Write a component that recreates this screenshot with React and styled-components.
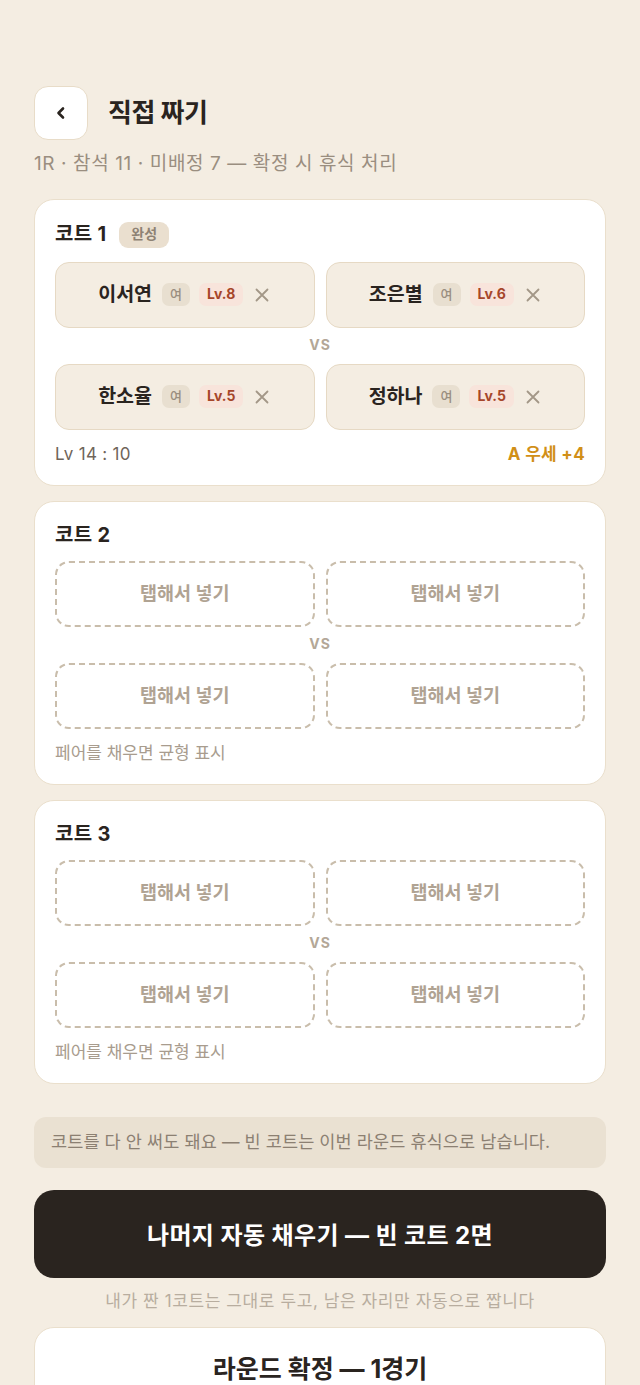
import React from "react";
import styled, { createGlobalStyle } from "styled-components";

const Global = createGlobalStyle`
  html, body { margin: 0; padding: 0; background: #F4EDE2; }
  body { font-family: Inter, "Noto Sans CJK KR", "Noto Sans", sans-serif; color: #2A241F; overflow: hidden; line-height: 1.45; }
  * { box-sizing: border-box; }
`;

const Page = styled.div`
  width: 640px;
  padding: 86px 34px 0;
  display: flex;
  flex-direction: column;
  & > * { flex-shrink: 0; }
`;

const Header = styled.div`
  display: flex;
  align-items: center;
  gap: 20px;
`;

const BackButton = styled.button`
  width: 54px;
  height: 54px;
  border-radius: 14px;
  background: #fff;
  border: 1.5px solid #E8DCC8;
  display: flex;
  align-items: center;
  justify-content: center;
  padding: 0;
  color: #2A241F;
`;

const Title = styled.h1`
  margin: 0;
  font-size: 26px;
  font-weight: 700;
  letter-spacing: -0.5px;
`;

const Sub = styled.div`
  margin-top: 10px;
  font-size: 19px;
  color: #9A8E80;
  letter-spacing: 0.6px;
`;

const Cards = styled.div`
  margin-top: 21px;
  display: flex;
  flex-direction: column;
  gap: 15px;
`;

const Card = styled.div`
  background: #fff;
  border: 1.5px solid #EADFCC;
  border-radius: 20px;
  padding: 21px 20px 19px;
`;

const CardHead = styled.div`
  display: flex;
  align-items: center;
  gap: 13px;
  height: ${p => (p.$short ? "25px" : "28px")};
`;

const CardTitle = styled.div`
  font-size: 20px;
  font-weight: 700;
  letter-spacing: 0.3px;
`;

const Badge = styled.span`
  background: #EADFCF;
  color: #8E8274;
  font-size: 14px;
  font-weight: 700;
  padding: 0 12px;
  height: 26px;
  border-radius: 9px;
  display: inline-flex;
  align-items: center;
`;

const Grid = styled.div`
  margin-top: 13px;
  display: grid;
  grid-template-columns: 1fr 1fr;
  column-gap: 11px;
`;

const Slot = styled.div`
  height: 66px;
  border-radius: 14px;
  display: flex;
  align-items: center;
  justify-content: center;
  gap: 9px;
  background: ${p => (p.$empty ? "#fff" : "#F4EDE2")};
  border: ${p => (p.$empty ? "2px dashed #C9BDAB" : "1.5px solid #E6D9C4")};
`;

const EmptyText = styled.span`
  font-size: 18.5px;
  font-weight: 700;
  color: #B0A393;
`;

const Name = styled.span`
  font-size: 19.5px;
  font-weight: 700;
  margin-right: 1px;
`;

const Tag = styled.span`
  height: 23px;
  padding: 0 8px;
  border-radius: 7px;
  font-size: ${p => (p.$lv ? "14px" : "13px")};
  font-weight: ${p => (p.$lv ? 700 : 500)};
  background: ${p => (p.$lv ? "#F8E4DB" : "#E8DFD0")};
  color: ${p => (p.$lv ? "#A6462A" : "#9A8E80")};
  display: inline-flex;
  align-items: center;
`;

const Close = styled.span`
  display: inline-flex;
  color: #A39787;
  margin-left: 1px;
`;

const Vs = styled.div`
  grid-column: 1 / span 2;
  height: 36px;
  display: flex;
  align-items: center;
  justify-content: center;
  font-size: 14px;
  font-weight: 700;
  color: #B3A797;
  letter-spacing: 1px;
`;

const Foot = styled.div`
  margin-top: 12px;
  height: 24px;
  display: flex;
  justify-content: space-between;
  align-items: center;
  font-size: 17px;
  line-height: 24px;
  letter-spacing: ${p => (p.$muted ? "0" : "0.3px")};
  color: ${p => (p.$muted ? "#A89C8E" : "#6F655A")};
`;

const Adv = styled.span`
  color: #D18F17;
  font-weight: 700;
  font-size: 17px;
  line-height: 24px;
`;

const Info = styled.div`
  margin-top: 33px;
  background: #EAE1D2;
  border-radius: 12px;
  height: 51px;
  padding: 0 17px;
  display: flex;
  align-items: center;
  font-size: 17.5px;
  color: #8C8072;
  letter-spacing: 0.1px;
`;

const Primary = styled.button`
  margin-top: 22px;
  height: 88px;
  border-radius: 20px;
  border: none;
  background: #2A241F;
  color: #fff;
  font-family: inherit;
  font-size: 24px;
  font-weight: 700;
  letter-spacing: 0.4px;
  width: 100%;
`;

const Caption = styled.div`
  margin-top: 11px;
  text-align: center;
  font-size: 17px;
  color: #B8AD9F;
  letter-spacing: 0.6px;
`;

const Confirm = styled.div`
  margin-top: 14px;
  background: #fff;
  border: 1.5px solid #EADFCC;
  border-radius: 20px;
  height: 100px;
  padding-top: 23px;
  text-align: center;
  font-size: 25px;
  font-weight: 700;
`;

const X = () => (
  <svg width="18" height="18" viewBox="0 0 18 18" fill="none" stroke="currentColor" strokeWidth="1.8" strokeLinecap="round">
    <path d="M3.5 3.5l11 11M14.5 3.5l-11 11" />
  </svg>
);

const Player = ({ name, lv }) => (
  <Slot>
    <Name>{name}</Name>
    <Tag>여</Tag>
    <Tag $lv>Lv.{lv}</Tag>
    <Close><X /></Close>
  </Slot>
);

const Empty = () => (
  <Slot $empty>
    <EmptyText>탭해서 넣기</EmptyText>
  </Slot>
);

const EmptyCourt = ({ n }) => (
  <Card>
    <CardHead $short>
      <CardTitle>코트 {n}</CardTitle>
    </CardHead>
    <Grid>
      <Empty />
      <Empty />
      <Vs>VS</Vs>
      <Empty />
      <Empty />
    </Grid>
    <Foot $muted>페어를 채우면 균형 표시</Foot>
  </Card>
);

export default function App() {
  return (
    <>
      <Global />
      <Page>
        <Header>
          <BackButton aria-label="뒤로">
            <svg width="14" height="16" viewBox="0 0 14 16" fill="none" stroke="currentColor" strokeWidth="2.6" strokeLinecap="round" strokeLinejoin="round">
              <path d="M9 3.5L4.5 8 9 12.5" />
            </svg>
          </BackButton>
          <Title>직접 짜기</Title>
        </Header>
        <Sub>1R · 참석 11 · 미배정 7 — 확정 시 휴식 처리</Sub>
        <Cards>
          <Card>
            <CardHead>
              <CardTitle>코트 1</CardTitle>
              <Badge>완성</Badge>
            </CardHead>
            <Grid>
              <Player name="이서연" lv={8} />
              <Player name="조은별" lv={6} />
              <Vs>VS</Vs>
              <Player name="한소율" lv={5} />
              <Player name="정하나" lv={5} />
            </Grid>
            <Foot>
              <span>Lv 14 : 10</span>
              <Adv>A 우세 +4</Adv>
            </Foot>
          </Card>
          <EmptyCourt n={2} />
          <EmptyCourt n={3} />
        </Cards>
        <Info>코트를 다 안 써도 돼요 — 빈 코트는 이번 라운드 휴식으로 남습니다.</Info>
        <Primary>나머지 자동 채우기 — 빈 코트 2면</Primary>
        <Caption>내가 짠 1코트는 그대로 두고, 남은 자리만 자동으로 짭니다</Caption>
        <Confirm>라운드 확정 — 1경기</Confirm>
      </Page>
    </>
  );
}
